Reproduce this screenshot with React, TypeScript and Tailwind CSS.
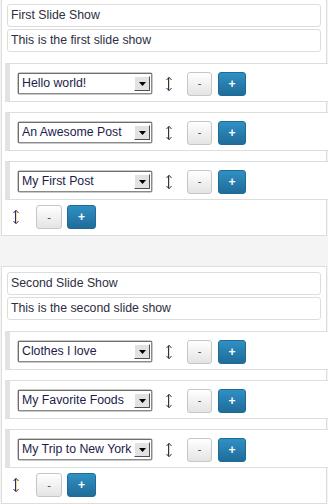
import React from 'react';

type Show = {
    title: string;
    description: string;
    posts: string[];
};

const shows: Show[] = [
    {
        title: 'First Slide Show',
        description: 'This is the first slide show',
        posts: ['Hello world!', 'An Awesome Post', 'My First Post'],
    },
    {
        title: 'Second Slide Show',
        description: 'This is the second slide show',
        posts: ['Clothes I love', 'My Favorite Foods', 'My Trip to New York'],
    },
];

// drag handle, drawn thin like the old cleartype glyph
const MoveHandle = () => (
    <svg width="6" height="16" viewBox="0 0 6 16" className="block shrink-0">
        <path d="M3.5 2v12" stroke="#f1dc9a" strokeWidth="1" />
        <path d="M2.5 2v12" stroke="#2b2f5c" strokeWidth="1" />
        <path d="M0.5 4L3 1.2L5.5 4M0.5 12L3 14.8L5.5 12" stroke="#2b2f5c" strokeWidth="1" fill="none" />
    </svg>
);

const MinusButton = ({ wide = false }: { wide?: boolean }) => (
    <button
        className={`${wide ? 'w-[26px]' : 'w-[25px]'} h-[24px] shrink-0 rounded-[3px] border border-[#c6c6c6] bg-gradient-to-b from-white to-[#e4e4e4] text-[11px] leading-none text-[#444]`}
    >
        -
    </button>
);

const PlusButton = ({ wide = false }: { wide?: boolean }) => (
    <button
        className={`${wide ? 'w-[29px]' : 'w-[28px]'} h-[24px] shrink-0 rounded-[3px] border border-[#1f6b96] bg-gradient-to-b from-[#3090c4] to-[#1f6c99] text-[12px] font-bold leading-none text-white`}
    >
        +
    </button>
);

const PostSelect = ({ value }: { value: string }) => (
    <div className="w-[136px] h-[23px] shrink-0 rounded-[3px] border border-[#c9c9c9]">
        <div className="flex h-full items-center border border-[#6d6d6d] border-b-[#8a8a8a] border-r-[#8a8a8a] pl-[3px] pr-px">
            <span className="flex-1 overflow-hidden whitespace-nowrap text-[12.3px] leading-none text-[#221c4c]">
                {value}
            </span>
            <span className="flex h-[15px] w-[16px] shrink-0 items-center justify-center border border-t-white border-l-white border-r-[#505050] border-b-[#505050] bg-[#e2e2e2]">
                <svg width="7" height="4" viewBox="0 0 7 4">
                    <path d="M0 0h7L3.5 4z" fill="#000" />
                </svg>
            </span>
        </div>
    </div>
);

const PostRow = ({ value }: { value: string }) => (
    <div className="ml-[3px] flex h-[39px] w-[340px] items-center border-y border-l-[5px] border-[#dddddd] border-l-[#e2e2e2] bg-white pl-[7px] pt-[2px]">
        <PostSelect value={value} />
        <div className="ml-[13px]">
            <MoveHandle />
        </div>
        <div className="ml-[15px] flex gap-[6px]">
            <MinusButton />
            <PlusButton />
        </div>
    </div>
);

const SlideShow = ({ show, className }: { show: Show; className: string }) => (
    <div className={`ml-px w-[326px] border border-[#dddddd] bg-white ${className}`}>
        <div className="flex flex-col gap-[2px] px-[5px] pt-[5px]">
            <div className="flex h-[23px] items-center rounded-[3px] border border-[#dddddd] pl-[3px] text-[12.3px] text-[#2e2e3e]">
                {show.title}
            </div>
            <div className="flex h-[23px] items-center rounded-[3px] border border-[#dddddd] pl-[3px] text-[12.3px] text-[#2e2e3e]">
                {show.description}
            </div>
        </div>
        <div className="mt-[11px] flex flex-col gap-[10px]">
            {show.posts.map((post) => (
                <PostRow key={post} value={post} />
            ))}
        </div>
        <div className="flex h-[35px] items-center pl-[11px] pt-[5px] pb-[6px]">
            <MoveHandle />
            <div className="ml-[17px] flex gap-[5px]">
                <MinusButton wide />
                <PlusButton wide />
            </div>
        </div>
    </div>
);

export default function App() {
    return (
        <div className="h-[504px] w-[328px] overflow-hidden bg-[#f4f4f4] font-['Liberation_Sans',Arial,sans-serif]">
            <SlideShow show={shows[0]} className="-mt-[2px]" />
            <SlideShow show={shows[1]} className="mt-[30px]" />
        </div>
    );
}
